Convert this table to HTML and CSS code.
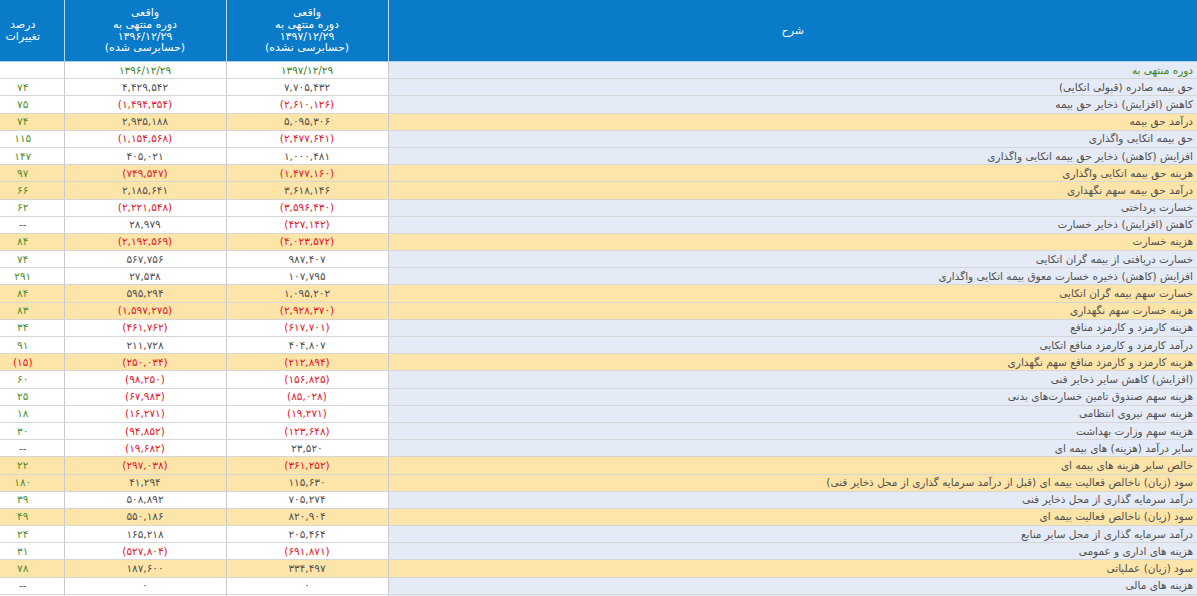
FILE: index.html
```html
<!DOCTYPE html>
<html lang="fa" dir="rtl">
<head>
<meta charset="utf-8">
<title>صورت سود و زیان</title>
<link rel="stylesheet" href="styles.css">
</head>
<body>
<table class="grid">
  <colgroup>
    <col class="c-desc">
    <col class="c-val">
    <col class="c-val">
    <col class="c-pct">
  </colgroup>
  <thead>
    <tr>
      <th>شرح</th>
      <th>واقعی<br>دوره منتهی به<br>۱۳۹۷/۱۲/۲۹<br>(حسابرسی نشده)</th>
      <th>واقعی<br>دوره منتهی به<br>۱۳۹۶/۱۲/۲۹<br>(حسابرسی شده)</th>
      <th class="pct">درصد<br>تغییرات</th>
    </tr>
  </thead>
  <tbody>
    <tr class="date"><td class="desc">دوره منتهی به</td><td>۱۳۹۷/۱۲/۲۹</td><td>۱۳۹۶/۱۲/۲۹</td><td class="pct"></td></tr>
    <tr><td class="desc">حق بیمه صادره (قبولی اتکایی)</td><td>۷,۷۰۵,۴۳۲</td><td>۴,۴۲۹,۵۴۲</td><td class="pct">۷۴</td></tr>
    <tr><td class="desc">کاهش (افزایش) ذخایر حق بیمه</td><td class="neg">(۲,۶۱۰,۱۲۶)</td><td class="neg">(۱,۴۹۴,۳۵۴)</td><td class="pct">۷۵</td></tr>
    <tr class="hl"><td class="desc">درآمد حق بیمه</td><td>۵,۰۹۵,۳۰۶</td><td>۲,۹۳۵,۱۸۸</td><td class="pct">۷۴</td></tr>
    <tr><td class="desc">حق بیمه اتکایی واگذاری</td><td class="neg">(۲,۴۷۷,۶۴۱)</td><td class="neg">(۱,۱۵۴,۵۶۸)</td><td class="pct">۱۱۵</td></tr>
    <tr><td class="desc">افزایش (کاهش) ذخایر حق بیمه اتکایی واگذاری</td><td>۱,۰۰۰,۴۸۱</td><td>۴۰۵,۰۲۱</td><td class="pct">۱۴۷</td></tr>
    <tr class="hl"><td class="desc">هزینه حق بیمه اتکایی واگذاری</td><td class="neg">(۱,۴۷۷,۱۶۰)</td><td class="neg">(۷۴۹,۵۴۷)</td><td class="pct">۹۷</td></tr>
    <tr class="hl"><td class="desc">درآمد حق بیمه سهم نگهداری</td><td>۳,۶۱۸,۱۴۶</td><td>۲,۱۸۵,۶۴۱</td><td class="pct">۶۶</td></tr>
    <tr><td class="desc">خسارت پرداختی</td><td class="neg">(۳,۵۹۶,۴۳۰)</td><td class="neg">(۲,۲۲۱,۵۴۸)</td><td class="pct">۶۲</td></tr>
    <tr><td class="desc">کاهش (افزایش) ذخایر خسارت</td><td class="neg">(۴۲۷,۱۴۲)</td><td>۲۸,۹۷۹</td><td class="pct na">--</td></tr>
    <tr class="hl"><td class="desc">هزینه خسارت</td><td class="neg">(۴,۰۲۳,۵۷۲)</td><td class="neg">(۲,۱۹۲,۵۶۹)</td><td class="pct">۸۴</td></tr>
    <tr><td class="desc">خسارت دریافتی از بیمه گران اتکایی</td><td>۹۸۷,۴۰۷</td><td>۵۶۷,۷۵۶</td><td class="pct">۷۴</td></tr>
    <tr><td class="desc">افزایش (کاهش) ذخیره خسارت معوق بیمه اتکایی واگذاری</td><td>۱۰۷,۷۹۵</td><td>۲۷,۵۳۸</td><td class="pct">۲۹۱</td></tr>
    <tr class="hl"><td class="desc">خسارت سهم بیمه گران اتکایی</td><td>۱,۰۹۵,۲۰۲</td><td>۵۹۵,۲۹۴</td><td class="pct">۸۴</td></tr>
    <tr class="hl"><td class="desc">هزینه خسارت سهم نگهداری</td><td class="neg">(۲,۹۲۸,۳۷۰)</td><td class="neg">(۱,۵۹۷,۲۷۵)</td><td class="pct">۸۳</td></tr>
    <tr><td class="desc">هزینه کارمزد و کارمزد منافع</td><td class="neg">(۶۱۷,۷۰۱)</td><td class="neg">(۴۶۱,۷۶۲)</td><td class="pct">۳۴</td></tr>
    <tr><td class="desc">درآمد کارمزد و کارمزد منافع اتکایی</td><td>۴۰۴,۸۰۷</td><td>۲۱۱,۷۲۸</td><td class="pct">۹۱</td></tr>
    <tr class="hl"><td class="desc">هزینه کارمزد و کارمزد منافع سهم نگهداری</td><td class="neg">(۲۱۲,۸۹۴)</td><td class="neg">(۲۵۰,۰۳۴)</td><td class="pct neg">(۱۵)</td></tr>
    <tr><td class="desc">(افزایش) کاهش سایر ذخایر فنی</td><td class="neg">(۱۵۶,۸۲۵)</td><td class="neg">(۹۸,۲۵۰)</td><td class="pct">۶۰</td></tr>
    <tr><td class="desc">هزینه سهم صندوق تامین خسارت‌های بدنی</td><td class="neg">(۸۵,۰۲۸)</td><td class="neg">(۶۷,۹۸۳)</td><td class="pct">۲۵</td></tr>
    <tr><td class="desc">هزینه سهم نیروی انتظامی</td><td class="neg">(۱۹,۲۷۱)</td><td class="neg">(۱۶,۲۷۱)</td><td class="pct">۱۸</td></tr>
    <tr><td class="desc">هزینه سهم وزارت بهداشت</td><td class="neg">(۱۲۳,۶۴۸)</td><td class="neg">(۹۴,۸۵۲)</td><td class="pct">۳۰</td></tr>
    <tr><td class="desc">سایر درآمد (هزینه) های بیمه ای</td><td>۲۳,۵۲۰</td><td class="neg">(۱۹,۶۸۲)</td><td class="pct na">--</td></tr>
    <tr class="hl"><td class="desc">خالص سایر هزینه های بیمه ای</td><td class="neg">(۳۶۱,۲۵۲)</td><td class="neg">(۲۹۷,۰۳۸)</td><td class="pct">۲۲</td></tr>
    <tr class="hl"><td class="desc">سود (زیان) ناخالص فعالیت بیمه ای (قبل از درآمد سرمایه گذاری از محل ذخایر فنی)</td><td>۱۱۵,۶۳۰</td><td>۴۱,۲۹۴</td><td class="pct">۱۸۰</td></tr>
    <tr><td class="desc">درآمد سرمایه گذاری از محل ذخایر فنی</td><td>۷۰۵,۲۷۴</td><td>۵۰۸,۸۹۲</td><td class="pct">۳۹</td></tr>
    <tr class="hl"><td class="desc">سود (زیان) ناخالص فعالیت بیمه ای</td><td>۸۲۰,۹۰۴</td><td>۵۵۰,۱۸۶</td><td class="pct">۴۹</td></tr>
    <tr><td class="desc">درآمد سرمایه گذاری از محل سایر منابع</td><td>۲۰۵,۴۶۴</td><td>۱۶۵,۲۱۸</td><td class="pct">۲۴</td></tr>
    <tr><td class="desc">هزینه های اداری و عمومی</td><td class="neg">(۶۹۱,۸۷۱)</td><td class="neg">(۵۲۷,۸۰۴)</td><td class="pct">۳۱</td></tr>
    <tr class="hl"><td class="desc">سود (زیان) عملیاتی</td><td>۳۳۴,۴۹۷</td><td>۱۸۷,۶۰۰</td><td class="pct">۷۸</td></tr>
    <tr><td class="desc">هزینه های مالی</td><td>۰</td><td>۰</td><td class="pct na">--</td></tr>
    <tr><td class="desc"></td><td></td><td></td><td class="pct"></td></tr>
  </tbody>
</table>
</body>
</html>
```

FILE: styles.css
```css
html, body {
  margin: 0;
  padding: 0;
  background: #ffffff;
}

body {
  font-family: "DejaVu Sans", Tahoma, sans-serif;
  font-size: 10.5px;
  color: #4a4a4a;
}

.grid {
  width: 1197px;
  border-collapse: collapse;
  table-layout: fixed;
  direction: rtl;
}

.c-desc { width: auto; }
.c-val { width: 162px; }
.c-pct { width: 64px; }

.grid thead th {
  background: #0a7bc9;
  color: #ffffff;
  font-weight: normal;
  font-size: 11px;
  line-height: 11.8px;
  height: 61px;
  padding: 0;
  text-align: center;
  vertical-align: middle;
  border-left: 1px solid #bcd9f0;
  border-bottom: 1px solid #a9cfee;
}

.grid thead th.pct {
  border-left: none;
  padding-right: 18px;
}

.grid tbody tr {
  height: 17.2px;
}

.grid tbody td {
  padding: 0;
  height: 16.2px;
  line-height: 15px;
  text-align: center;
  white-space: nowrap;
  overflow: hidden;
  border-bottom: 1px solid #d6d6d6;
  border-left: 1px solid #c9c9c9;
  color: #505050;
}

.grid tbody td.desc {
  text-align: right;
  padding-right: 4px;
  background: #e4ebf7;
}

.grid tbody td.pct {
  border-left: none;
  padding-right: 18px;
  color: #4f8e2c;
}

.grid tbody tr.hl td,
.grid tbody tr.hl td.desc {
  background: #fde4a8;
}

.grid tbody td.neg {
  color: #e3142a;
}

.grid tbody td.pct.neg {
  color: #e3142a;
}

.grid tbody td.pct.na {
  color: #555555;
}

.grid tbody tr.date td {
  color: #3f7f22;
}
```
